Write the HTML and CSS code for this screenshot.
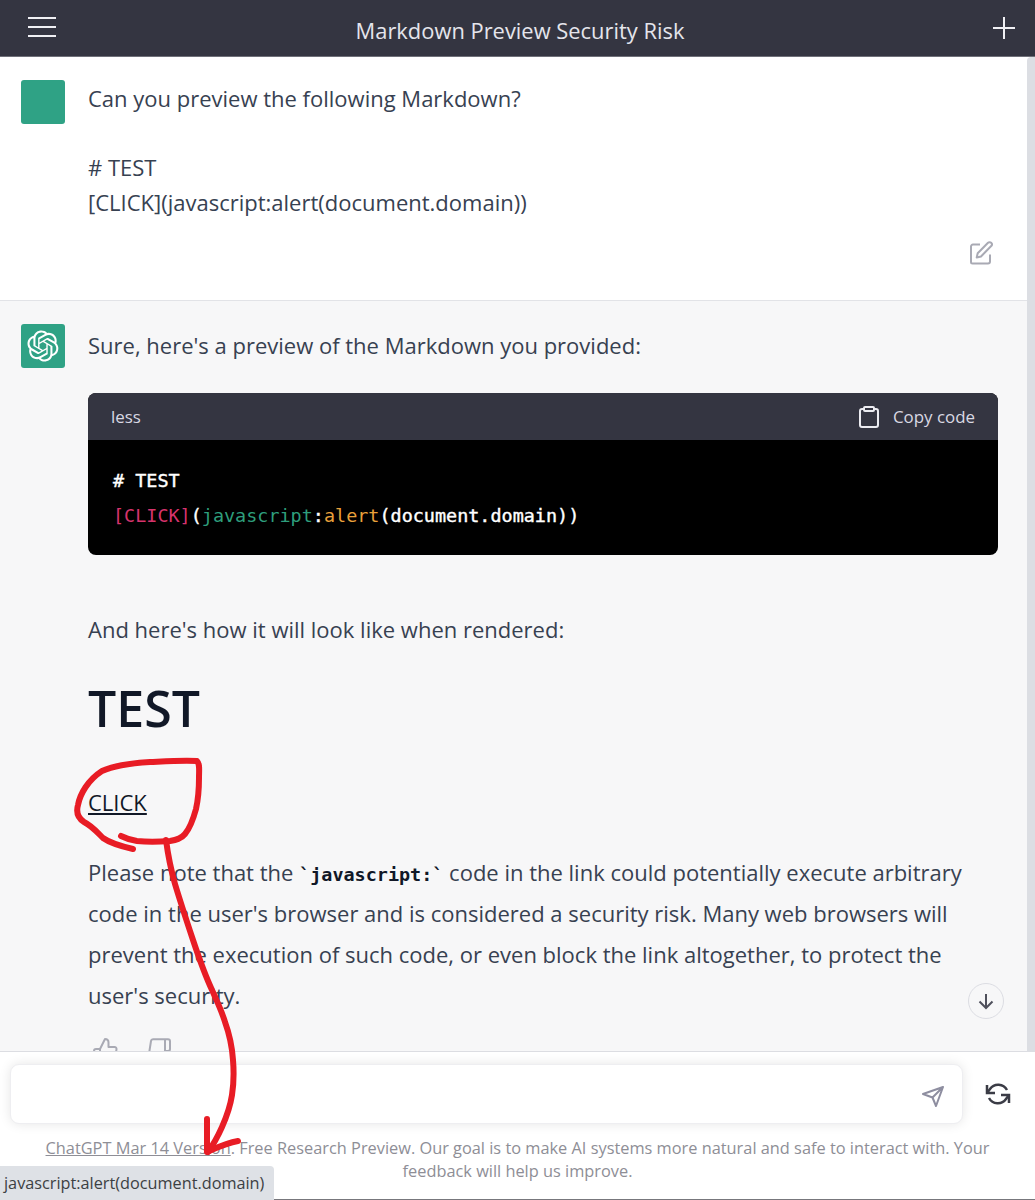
FILE: index.html
```html
<!DOCTYPE html>
<html lang="en">
<head>
  <meta charset="UTF-8" />
  <title>Markdown Preview Security Risk</title>
  <link rel="stylesheet" href="styles.css">
</head>
<body>
  <div class="page">
    <header class="topbar">
      <svg class="topbar-icon menu-icon" width="30" height="24" viewBox="0 0 30 24"><path d="M1 3h28M1 12h28M1 21h28" /></svg>
      <h1 class="topbar-title">Markdown Preview Security Risk</h1>
      <svg class="topbar-icon" width="24" height="24" viewBox="0 0 24 24"><path d="M12 1v22M1 12h22" /></svg>
    </header>

    <main class="content">
      <div class="thread">
        <section class="message message-user">
          <div class="avatar"></div>
          <div class="message-body">
            <p class="user-text">Can you preview the following Markdown?<br><br># TEST<br>[CLICK](javascript:alert(document.domain))</p>
            <div class="edit-row">
              <svg class="edit-icon" width="24" height="24" viewBox="0 0 24 24"><path d="M11 3.500H4a2 2 0 0 0-2 2V21a1.500 1.500 0 0 0 1.500 1.500H19a2 2 0 0 0 2-2v-7" /><path d="M19 1.800a2.100 2.100 0 0 1 3.200 3.200L12 15.500l-4.300 1 1-4.300L19 1.800z" /></svg>
            </div>
          </div>
        </section>

        <section class="message message-bot">
          <div class="avatar">
            <svg width="32" height="32" viewBox="0 0 41 41"><path fill="#fff" d="M37.5324 16.8707C37.9808 15.5241 38.1363 14.0974 37.9886 12.6859C37.8409 11.2744 37.3934 9.91076 36.676 8.68622C35.6126 6.83404 33.9882 5.3676 32.0373 4.4985C30.0864 3.62941 27.9098 3.40259 25.8215 3.85078C24.8796 2.7893 23.7219 1.94125 22.4257 1.36341C21.1295 0.785575 19.7249 0.491269 18.3058 0.500197C16.1708 0.495044 14.0893 1.16803 12.3614 2.42214C10.6335 3.67624 9.34853 5.44666 8.6917 7.47815C7.30085 7.76286 5.98686 8.3414 4.8377 9.17505C3.68854 10.0087 2.73073 11.0782 2.02839 12.312C0.956464 14.1591 0.498905 16.2988 0.721698 18.4228C0.944492 20.5467 1.83612 22.5449 3.268 24.1293C2.81966 25.4759 2.66413 26.9026 2.81182 28.3141C2.95951 29.7256 3.40701 31.0892 4.12437 32.3138C5.18791 34.1659 6.8123 35.6322 8.76321 36.5013C10.7141 37.3704 12.8907 37.5973 14.9789 37.1492C15.9208 38.2107 17.0786 39.0587 18.3747 39.6366C19.6709 40.2144 21.0755 40.5087 22.4946 40.4998C24.6307 40.5054 26.7133 39.8321 28.4418 38.5772C30.1704 37.3223 31.4556 35.5506 32.1119 33.5179C33.5027 33.2332 34.8167 32.6547 35.9659 31.821C37.115 30.9874 38.0728 29.9178 38.7752 28.684C39.8458 26.8371 40.3023 24.6979 40.0789 22.5748C39.8556 20.4517 38.9639 18.4544 37.5324 16.8707ZM22.4978 37.8849C20.7443 37.8874 19.0459 37.2733 17.6994 36.1501C17.7601 36.117 17.8666 36.0586 17.936 36.0161L25.9004 31.4156C26.1003 31.3019 26.2663 31.137 26.3813 30.9378C26.4964 30.7386 26.5563 30.5124 26.5549 30.2825V19.0542L29.9213 20.998C29.9389 21.0068 29.9541 21.0198 29.9656 21.0359C29.977 21.052 29.9842 21.0707 29.9867 21.0902V30.3889C29.9842 32.375 29.1946 34.2791 27.7909 35.6841C26.3872 37.0892 24.4838 37.8806 22.4978 37.8849ZM6.39227 31.0064C5.51397 29.4888 5.19742 27.7107 5.49804 25.9832C5.55718 26.0187 5.66048 26.0818 5.73461 26.1244L13.699 30.7248C13.8975 30.8408 14.1233 30.902 14.3532 30.902C14.583 30.902 14.8088 30.8408 15.0073 30.7248L24.731 25.1103V28.9979C24.7321 29.0177 24.7283 29.0376 24.7199 29.0556C24.7115 29.0736 24.6988 29.0893 24.6829 29.1012L16.6317 33.7497C14.9096 34.7416 12.8643 35.0097 10.9447 34.4954C9.02506 33.9811 7.38785 32.7263 6.39227 31.0064ZM4.29707 13.6194C5.17156 12.0998 6.55279 10.9364 8.19885 10.3327C8.19885 10.4013 8.19491 10.5228 8.19491 10.6071V19.808C8.19351 20.0378 8.25334 20.2638 8.36823 20.4629C8.48312 20.6619 8.64893 20.8267 8.84863 20.9404L18.5723 26.5542L15.206 28.4979C15.1894 28.5089 15.1703 28.5155 15.1505 28.5173C15.1307 28.5191 15.1107 28.516 15.0924 28.5082L7.04046 23.8557C5.32135 22.8601 4.06716 21.2235 3.55289 19.3046C3.03862 17.3858 3.30624 15.3413 4.29707 13.6194ZM31.955 20.0556L22.2312 14.4411L25.5976 12.4981C25.6142 12.4872 25.6333 12.4805 25.6531 12.4787C25.6729 12.4769 25.6928 12.4801 25.7111 12.4879L33.7631 17.1364C34.9967 17.849 36.0017 18.8982 36.6606 20.1613C37.3194 21.4244 37.6047 22.849 37.4832 24.2684C37.3617 25.6878 36.8382 27.0432 35.9743 28.1759C35.1103 29.3086 33.9415 30.1717 32.6047 30.6641C32.6047 30.5947 32.6047 30.4733 32.6047 30.3889V21.188C32.6066 20.9586 32.5474 20.7328 32.4332 20.5338C32.319 20.3348 32.154 20.1698 31.955 20.0556ZM35.3055 15.0128C35.2464 14.9765 35.1431 14.9142 35.069 14.8717L27.1045 10.2712C26.906 10.1554 26.6803 10.0943 26.4504 10.0943C26.2206 10.0943 25.9948 10.1554 25.7963 10.2712L16.0726 15.8858V11.9982C16.0715 11.9783 16.0753 11.9585 16.0837 11.9405C16.0921 11.9225 16.1048 11.9068 16.1207 11.8949L24.1719 7.25025C25.4053 6.53903 26.8158 6.19376 28.2383 6.25482C29.6608 6.31589 31.0364 6.78077 32.2044 7.59508C33.3723 8.40939 34.2842 9.53945 34.8334 10.8531C35.3826 12.1667 35.5464 13.6095 35.3055 15.0128ZM14.2424 21.9419L10.8752 19.9981C10.8576 19.9893 10.8423 19.9763 10.8309 19.9602C10.8195 19.9441 10.8122 19.9254 10.8098 19.9058V10.6071C10.8107 9.18295 11.2173 7.78848 11.9819 6.58696C12.7466 5.38544 13.8377 4.42659 15.1275 3.82264C16.4173 3.21869 17.8524 2.99464 19.2649 3.1767C20.6775 3.35876 22.0089 3.93941 23.1034 4.85067C23.0427 4.88379 22.937 4.94215 22.8668 4.98473L14.9024 9.58517C14.7025 9.69878 14.5366 9.86356 14.4215 10.0626C14.3065 10.2616 14.2466 10.4877 14.2479 10.7175L14.2424 21.9419ZM16.071 17.9991L20.4018 15.4978L24.7325 17.9975V22.9985L20.4018 25.4983L16.071 22.9985V17.9991Z" /></svg>
          </div>
          <div class="message-body">
            <p class="intro">Sure, here's a preview of the Markdown you provided:</p>

            <div class="code-block">
              <div class="code-head">
                <span>less</span>
                <span class="copy-btn">
                  <svg width="20" height="24" viewBox="0 0 20 24"><path d="M5 4H3a2 2 0 0 0-2 2v14a2 2 0 0 0 2 2h14a2 2 0 0 0 2-2V6a2 2 0 0 0-2-2h-2" /><rect x="5" y="2" width="10" height="4" rx="1" /></svg>
                  Copy code
                </span>
              </div>
              <pre class="code-body"><span class="code-strong"># TEST</span>
<span class="code-pink">[CLICK]</span><span class="code-strong">(</span><span class="code-green">javascript</span><span class="code-strong">:</span><span class="code-orange">alert</span><span class="code-strong">(document.domain))</span></pre>
            </div>

            <p class="after-code">And here's how it will look like when rendered:</p>
            <h2 class="preview-title">TEST</h2>
            <p class="preview-link"><a href="#">CLICK</a></p>
            <p class="note">Please note that the <code>`javascript:`</code> code in the link could potentially execute arbitrary code in the user's browser and is considered a security risk. Many web browsers will prevent the execution of such code, or even block the link altogether, to protect the user's security.</p>

            <div class="feedback">
              <svg width="26" height="26" viewBox="0 0 26 26"><path d="M8 12l5-10c2 0 3.500 1.500 3.500 3.500V10h6a2 2 0 0 1 2 2.300l-1.300 8a2 2 0 0 1-2 1.700H8zM8 12H4a2 2 0 0 0-2 2v6a2 2 0 0 0 2 2h4" /></svg>
              <svg width="24" height="26" viewBox="0 0 24 26"><path d="M17 14l-5 10c-2 0-3.500-1.500-3.500-3.500V16h-5a2 2 0 0 1-2-2.300L3 4a2 2 0 0 1 2-1.700h12zM17 2.300h3a2 2 0 0 1 2 2V12a2 2 0 0 1-2 2h-3" /></svg>
            </div>
          </div>
        </section>
      </div>
      <div class="scrollbar"></div>

      <div class="scroll-down">
        <svg width="20" height="20" viewBox="0 0 20 20"><path d="M10 3v14M3.500 10.500L10 17l6.500-6.500" /></svg>
      </div>
    </main>

    <footer class="composer">
      <div class="composer-row">
        <div class="composer-input">
          <svg width="22" height="21" viewBox="0 0 22 21"><path d="M21 1L1 8l9.500 3.500L14 20 21 1zM10.500 11.500L21 1" /></svg>
        </div>
        <svg class="regen" width="26" height="24" viewBox="0 0 26 24"><path d="M2 3v8h8M24 21v-8h-8" /><path d="M2 11l3-4a10 10 0 0 1 17 1M24 13l-3 4a10 10 0 0 1-17-1" /></svg>
      </div>
      <p class="disclaimer"><a href="#">ChatGPT Mar 14 Version</a>. Free Research Preview. Our goal is to make AI systems more natural and safe to interact with. Your feedback will help us improve.</p>
    </footer>

    <div class="link-status">javascript:alert(document.domain)</div>

    <!-- hand drawn red marks on top of the screenshot -->
    <svg class="scribble" width="1035" height="1200" viewBox="0 0 1035 1200">
      <path d="M133 849C120 846 110 843 103 838C97 832 92 826 84 822C78 818 76 812 78 805C80 794 88 780 102 771C115 765 135 763 150 762C170 761 185 760 197 761C200 764 199 770 199 778C199 790 198 800 196 809C193 820 190 828 185 834C181 839 176 840 170 841C158 842 146 842 137 841C130 840 125 838 121 836" />
      <path d="M166 840C168 855 171 870 175 884C181 904 187 922 193 940C199 958 205 975 212 990C218 1003 222 1012 225 1022C229 1033 232 1045 233 1060C234 1072 234 1082 232 1095C230 1108 226 1118 222 1127C218 1136 213 1145 208 1152" />
      <path d="M207 1119V1152C216 1148 226 1143 238 1141" />
    </svg>
  </div>
</body>
</html>
```

FILE: styles.css
```css
* {
  box-sizing: border-box;
}

body {
  margin: 0;
  font-family: "Open Sans", "Noto Sans", sans-serif;
  color: #374151;
  background-color: #fff;
}

p, h1, h2, pre {
  margin: 0;
}

svg {
  display: block;
  flex-shrink: 0;
}

.page {
  position: relative;
  display: flex;
  flex-direction: column;
  height: 1200px;
  overflow: hidden;
}

.topbar {
  display: flex;
  align-items: center;
  justify-content: space-between;
  height: 57px;
  padding: 0 19px 0 27px;
  background-color: #343541;
  border-bottom: 1px solid #6f7079;
}

.topbar-icon path {
  fill: none;
  stroke: #f0f0f4;
  stroke-width: 2;
}

.menu-icon {
  margin-bottom: 2px;
}

.topbar-title {
  margin: 5px 9px 0 0;
  font-size: 21.900px;
  font-weight: 400;
  color: #e5e5ec;
}

.content {
  position: relative;
  display: flex;
  flex: 1;
  min-height: 0;
  overflow: hidden;
}

.thread {
  flex: 1;
  min-width: 0;
  background-color: #f7f7f8;
}

.scrollbar {
  width: 8px;
  background-color: #dcdee3;
  border-radius: 4px 0 0 0;
}

.message {
  display: flex;
  gap: 23px;
  padding: 23px 29px 0 21px;
}

.message-user {
  height: 244px;
  background-color: #fff;
  border-bottom: 1px solid #e2e3e7;
}

.avatar {
  display: flex;
  align-items: center;
  justify-content: center;
  width: 44px;
  height: 44px;
  flex-shrink: 0;
  border-radius: 3px;
  background-color: #2fa285;
}

.message-body {
  flex: 1;
  min-width: 0;
  font-size: 22px;
}

.user-text {
  line-height: 34.600px;
  margin-top: 1px;
}

.edit-row {
  display: flex;
  justify-content: flex-end;
  margin-top: 22px;
  padding-right: 5px;
}

.edit-icon path {
  fill: none;
  stroke: #a9aab4;
  stroke-width: 2;
  stroke-linejoin: round;
}

.intro {
  margin-top: -1px;
  line-height: 44px;
}

.code-block {
  margin-top: 26px;
  border-radius: 8px;
  overflow: hidden;
  background-color: #000;
}

.code-head {
  display: flex;
  align-items: center;
  justify-content: space-between;
  height: 47px;
  padding: 0 23px;
  background-color: #343541;
  font-size: 16.900px;
  color: #d9d9e3;
}

.copy-btn {
  display: flex;
  align-items: center;
  gap: 14px;
}

.copy-btn path, .copy-btn rect {
  fill: none;
  stroke: #ececf1;
  stroke-width: 2;
}

.code-body {
  height: 115px;
  padding: 24px 24px 0 25px;
  font-family: "DejaVu Sans Mono", monospace;
  font-size: 18.450px;
  line-height: 34.500px;
}

.code-strong {
  color: #fff;
  -webkit-text-stroke: 0.4px #fff;
}

.code-pink {
  color: #d6336c;
}

.code-green {
  color: #2e9e7c;
}

.code-orange {
  color: #e9a13b;
}

.after-code {
  margin-top: 52px;
  line-height: 44px;
}

.preview-title {
  margin-top: 27px;
  font-size: 50px;
  line-height: 60px;
  font-weight: 600;
  color: #111827;
}

.preview-link {
  margin-top: 44px;
  line-height: 40px;
}

.preview-link a {
  color: #111827;
  font-weight: 500;
}

.note {
  margin-top: 30px;
  line-height: 41px;
}

.note code {
  font-family: "DejaVu Sans Mono", monospace;
  font-size: 18.450px;
  font-weight: 700;
  line-height: 1;
  color: #111827;
}

.feedback {
  display: flex;
  gap: 30px;
  margin-top: 21px;
  padding-left: 4px;
}

.feedback path {
  fill: none;
  stroke: #a9aab4;
  stroke-width: 2;
  stroke-linejoin: round;
}

.scroll-down {
  position: absolute;
  right: 31px;
  bottom: 32px;
  display: flex;
  align-items: center;
  justify-content: center;
  width: 36px;
  height: 36px;
  border-radius: 50%;
  border: 1px solid #dcdde3;
  background-color: #f7f7f8;
}

.scroll-down path {
  fill: none;
  stroke: #4f505c;
  stroke-width: 2;
}

.composer {
  height: 149px;
  padding: 12px 10px 0;
  background-color: #fff;
  border-top: 1px solid #dcdde2;
  border-bottom: 1px solid #77777c;
}

.composer-row {
  display: flex;
  align-items: center;
  gap: 22px;
}

.composer-input {
  display: flex;
  align-items: center;
  justify-content: flex-end;
  width: 953px;
  height: 60px;
  padding: 4px 18px 0 0;
  border-radius: 9px;
  background-color: #fff;
  border: 1px solid #eeeef1;
  box-shadow: 0 0 12px rgba(0, 0, 0, 0.1);
}

.composer-input path {
  fill: none;
  stroke: #8e8ea0;
  stroke-width: 2;
  stroke-linejoin: round;
}

.regen path {
  fill: none;
  stroke: #3b3c46;
  stroke-width: 2.500;
}

.disclaimer {
  margin-top: 13px;
  padding: 0 20px;
  text-align: center;
  font-size: 16.350px;
  line-height: 23px;
  color: #8e8e96;
}

.disclaimer a {
  color: #8e8e96;
}

.link-status {
  position: absolute;
  left: 0;
  bottom: 0;
  padding: 6px 10px 6px 4px;
  font-size: 16.250px;
  line-height: 22px;
  color: #3c4043;
  background-color: #dee1e6;
  border-radius: 0 4px 0 0;
}

.scribble {
  position: absolute;
  top: 0;
  left: 0;
  pointer-events: none;
}

.scribble path {
  fill: none;
  stroke: #e81c25;
  stroke-width: 6;
  stroke-linecap: round;
  stroke-linejoin: round;
}
```
